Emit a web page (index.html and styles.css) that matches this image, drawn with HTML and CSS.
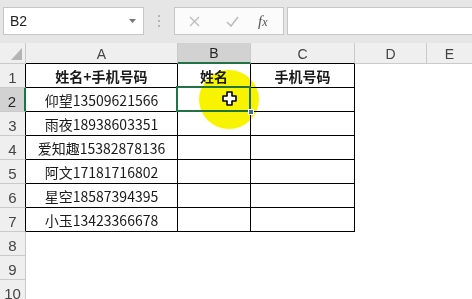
FILE: index.html
```html
<!DOCTYPE html>
<html lang="zh-CN">
    <head>
        <meta charset="utf-8">
        <title>Book1 - Excel</title>
        <link rel="stylesheet" href="styles.css">
    </head>
    <body>
        <header class="toolbar">
            <div class="namebox">
                <span>B2</span>
                <svg width="7" height="4" viewBox="0 0 7 4"><path d="M0 0h7L3.5 4z" fill="#777"/></svg>
            </div>
            <div class="grip"><i></i><i></i><i></i></div>
            <div class="fx-buttons">
                <svg class="cancel" width="11" height="11" viewBox="0 0 11 11"><path d="M1 1l9 9M10 1l-9 9" stroke="#bdbdbd" stroke-width="1.4"/></svg>
                <svg class="enter" width="13" height="11" viewBox="0 0 13 11"><path d="M1 6l4 4l7-9" stroke="#bdbdbd" stroke-width="1.6" fill="none"/></svg>
                <span class="fx">f<small>x</small></span>
            </div>
            <div class="formula"></div>
        </header>
        <main class="sheet">
            <div class="hd corner"><b></b></div>
            <div class="hd col">A</div>
            <div class="hd col active">B</div>
            <div class="hd col">C</div>
            <div class="hd col">D</div>
            <div class="hd col last">E</div>

            <div class="hd row in">1</div>
            <div class="cell t bold">姓名+手机号码</div>
            <div class="cell t bold">姓名</div>
            <div class="cell t bold">手机号码</div>
            <div class="cell"></div><div class="cell"></div>

            <div class="hd row in active">2</div>
            <div class="cell t">仰望13509621566</div>
            <div class="cell t"></div>
            <div class="cell t"></div>
            <div class="cell"></div><div class="cell"></div>

            <div class="hd row in">3</div>
            <div class="cell t">雨夜18938603351</div>
            <div class="cell t"></div>
            <div class="cell t"></div>
            <div class="cell"></div><div class="cell"></div>

            <div class="hd row in">4</div>
            <div class="cell t">爱知趣15382878136</div>
            <div class="cell t"></div>
            <div class="cell t"></div>
            <div class="cell"></div><div class="cell"></div>

            <div class="hd row in">5</div>
            <div class="cell t">阿文17181716802</div>
            <div class="cell t"></div>
            <div class="cell t"></div>
            <div class="cell"></div><div class="cell"></div>

            <div class="hd row in">6</div>
            <div class="cell t">星空18587394395</div>
            <div class="cell t"></div>
            <div class="cell t"></div>
            <div class="cell"></div><div class="cell"></div>

            <div class="hd row in">7</div>
            <div class="cell t">小玉13423366678</div>
            <div class="cell t"></div>
            <div class="cell t"></div>
            <div class="cell"></div><div class="cell"></div>

            <div class="hd row">8</div>
            <div class="cell"></div><div class="cell"></div><div class="cell"></div><div class="cell"></div><div class="cell"></div>
            <div class="hd row">9</div>
            <div class="cell"></div><div class="cell"></div><div class="cell"></div><div class="cell"></div><div class="cell"></div>
            <div class="hd row">10</div>
            <div class="cell"></div><div class="cell"></div><div class="cell"></div><div class="cell"></div><div class="cell"></div>

            <!-- pointer highlight, selection and cursor lie over the cells -->
            <div class="spot"></div>
            <div class="selection"><b></b></div>
            <svg class="cursor" width="15" height="15" viewBox="0 0 15 15">
                <path d="M5 1h5v4h4v5h-4v4H5v-4H1V5h4z" fill="#fff" stroke="#000" stroke-width="1.6" stroke-linejoin="round"/>
            </svg>
        </main>
    </body>
</html>
```

FILE: styles.css
```css
:root {
    --color-toolbar: #e6e6e6;
    --color-box-border: #c6c6c6;
    --color-head: #efefef;
    --color-head-line: #cacaca;
    --color-head-active: #d2d2d2;
    --color-head-text: #444;
    --color-excel: #217346;
    --font-ui: "Liberation Sans", "Noto Sans CJK SC", sans-serif;
    --font-cell: "Noto Sans CJK SC", sans-serif;
}
* { padding: 0; margin: 0; box-sizing: border-box; }
html, body { height: 100%; overflow: hidden; background: #fff; }
body { font-family: var(--font-ui); }

/* formula bar */
.toolbar {
    display: flex; align-items: stretch;
    height: 43px; padding: 7px 0 8px 3px;
    background-color: var(--color-toolbar);
}
.namebox {
    width: 141px; display: flex; align-items: center; justify-content: space-between;
    padding: 0 7px 0 6px;
    background: #fff; border: 1px solid var(--color-box-border);
    font-size: 14px; color: #222;
}
.grip { width: 30px; display: flex; flex-direction: column; align-items: center; justify-content: center; gap: 3px; }
.grip i { width: 2px; height: 2px; background: #b5b5b5; }
.fx-buttons {
    width: 110px; display: flex; align-items: center;
    background: #fbfbfb; border: 1px solid var(--color-box-border);
    padding-left: 14px;
}
.fx-buttons .enter { margin-left: 26px; }
.fx {
    margin-left: 19px; font-family: "Liberation Serif", serif; font-style: italic;
    font-size: 15px; color: #555;
}
.fx small { font-size: 12px; }
.formula { flex: auto; margin-left: 3px; background: #fff; border: 1px solid var(--color-box-border); border-right: none; }

/* sheet grid */
.sheet {
    position: relative;
    display: grid;
    grid-template-columns: 26px 152px 73px 104px 72px 1fr;
    grid-template-rows: 21px repeat(10, 24px);
}
.hd {
    background-color: var(--color-head); color: var(--color-head-text);
    display: flex; align-items: center; justify-content: center;
    font-size: 14px;
    border-right: 1px solid var(--color-head-line);
    border-bottom: 1px solid var(--color-head-line);
}
.hd.col { padding-top: 1px; }
.hd.col:nth-child(-n+4) { border-bottom-color: #000; }
.hd.last { border-right: none; }
.hd.row { padding-top: 3px; font-size: 15px; }
.hd.row.in { border-right-color: #000; }
.hd.active { background-color: var(--color-head-active); color: #262626; }
.hd.col.active { border-bottom: 2px solid var(--color-excel); }
.hd.row.active { border-right: 2px solid var(--color-excel); }
.corner { position: relative; }
.corner b {
    position: absolute; right: 3px; bottom: 3px; width: 11px; height: 12px;
    background: #b4b4b4; clip-path: polygon(100% 0, 100% 100%, 0 100%);
}

.cell { font-family: var(--font-cell); font-size: 14px; color: #1a1a1a; }
.cell.t {
    display: flex; align-items: center; justify-content: center;
    border-right: 1px solid #000; border-bottom: 1px solid #000;
    padding-top: 1px;
}
.cell.bold { font-weight: bold; }

.spot {
    position: absolute; left: 199px; top: 27px; width: 60px; height: 59px;
    border-radius: 50%;
    background: radial-gradient(circle, #f8f400 88%, rgba(248, 244, 0, 0) 100%);
    mix-blend-mode: multiply;
}
.selection {
    position: absolute; left: 176px; top: 43px; width: 75px; height: 26px;
    border: 2px solid var(--color-excel);
}
.selection b {
    position: absolute; right: -5px; bottom: -5px; width: 6px; height: 6px;
    background: #3b7393; border: 1px solid #fff;
}
.cursor { position: absolute; left: 222px; top: 48px; }
```
